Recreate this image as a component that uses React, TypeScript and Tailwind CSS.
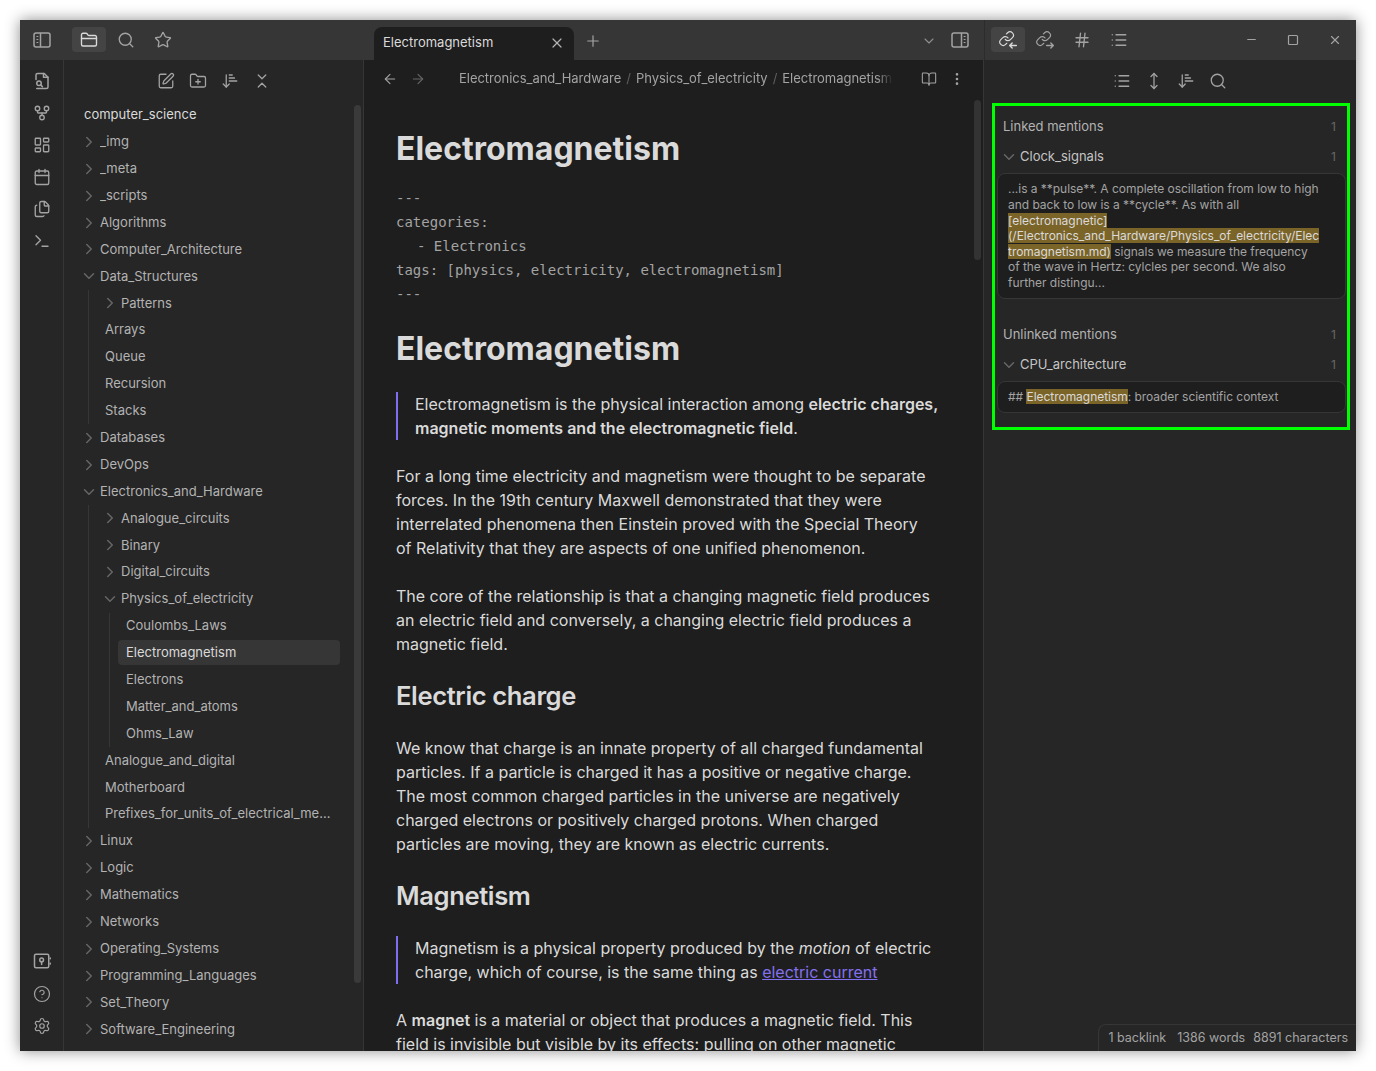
import { ReactNode } from 'react';
import {
  ArrowDownNarrowWide,
  ArrowLeft,
  ArrowRight,
  BookOpen,
  Calendar,
  ChevronDown,
  ChevronRight,
  ChevronsDownUp,
  CircleHelp,
  EllipsisVertical,
  Files,
  FolderClosed,
  FolderPlus,
  GitFork,
  Hash,
  LayoutDashboard,
  List,
  Minus,
  MoveVertical,
  Plus,
  Search,
  Settings,
  Square,
  SquarePen,
  Star,
  Terminal,
  X,
} from 'lucide-react';

type TreeNode = { name: string; children?: TreeNode[]; closed?: boolean; active?: boolean };

const tree: TreeNode[] = [
  { name: '_img', closed: true },
  { name: '_meta', closed: true },
  { name: '_scripts', closed: true },
  { name: 'Algorithms', closed: true },
  { name: 'Computer_Architecture', closed: true },
  {
    name: 'Data_Structures',
    children: [
      { name: 'Patterns', closed: true },
      { name: 'Arrays' },
      { name: 'Queue' },
      { name: 'Recursion' },
      { name: 'Stacks' },
    ],
  },
  { name: 'Databases', closed: true },
  { name: 'DevOps', closed: true },
  {
    name: 'Electronics_and_Hardware',
    children: [
      { name: 'Analogue_circuits', closed: true },
      { name: 'Binary', closed: true },
      { name: 'Digital_circuits', closed: true },
      {
        name: 'Physics_of_electricity',
        children: [
          { name: 'Coulombs_Laws' },
          { name: 'Electromagnetism', active: true },
          { name: 'Electrons' },
          { name: 'Matter_and_atoms' },
          { name: 'Ohms_Law' },
        ],
      },
      { name: 'Analogue_and_digital' },
      { name: 'Motherboard' },
      { name: 'Prefixes_for_units_of_electrical_measurement' },
    ],
  },
  { name: 'Linux', closed: true },
  { name: 'Logic', closed: true },
  { name: 'Mathematics', closed: true },
  { name: 'Networks', closed: true },
  { name: 'Operating_Systems', closed: true },
  { name: 'Programming_Languages', closed: true },
  { name: 'Set_Theory', closed: true },
  { name: 'Software_Engineering', closed: true },
];

// Obsidian's own icons that lucide doesn't ship
function SidebarLeftIcon() {
  return (
    <svg width="20" height="20" viewBox="0 0 20 20" fill="none" stroke="currentColor" strokeWidth="1.500">
      <rect x="2" y="3" width="16" height="14" rx="2" />
      <path d="M8.500 3v14" />
      <path d="M4.500 6.500h1.800M4.500 9.500h1.800M4.500 12.500h1.800" strokeWidth="1.200" />
    </svg>
  );
}

function SidebarRightIcon() {
  return (
    <svg width="20" height="20" viewBox="0 0 20 20" fill="none" stroke="currentColor" strokeWidth="1.500">
      <rect x="2" y="3" width="16" height="14" rx="2" />
      <path d="M11.500 3v14" />
      <path d="M13.700 6.500h1.800M13.700 9.500h1.800M13.700 12.500h1.800" strokeWidth="1.200" />
    </svg>
  );
}

function LinkArrowIcon({ out }: { out?: boolean }) {
  return (
    <svg width="20" height="20" viewBox="0 0 24 24" fill="none" stroke="currentColor" strokeWidth="1.700" strokeLinecap="round" strokeLinejoin="round">
      <g transform="translate(0.500 0.500) scale(0.82)">
        <path d="M10 13a5 5 0 0 0 7.540.54l3-3a5 5 0 0 0-7.070-7.070l-1.720 1.710" />
        <path d="M14 11a5 5 0 0 0-7.540-.54l-3 3a5 5 0 0 0 7.070 7.070l1.710-1.710" />
      </g>
      {out ? (
        <path d="M14 18.500h8M19 15.500l3 3-3 3" />
      ) : (
        <path d="M22 18.500h-8M17 15.500l-3 3 3 3" />
      )}
    </svg>
  );
}

function FileSearchIcon() {
  return (
    <svg width="18" height="18" viewBox="0 0 24 24" fill="none" stroke="currentColor" strokeWidth="2" strokeLinecap="round" strokeLinejoin="round">
      <path d="M4 10V4a2 2 0 0 1 2-2h9l5 5v13a2 2 0 0 1-2 2H5" />
      <path d="M14 2v5h6" />
      <circle cx="8" cy="15" r="3" />
      <path d="m12.500 19.500-2.300-2.300" />
    </svg>
  );
}

function VaultIcon() {
  return (
    <svg width="18" height="18" viewBox="0 0 24 24" fill="none" stroke="currentColor" strokeWidth="2" strokeLinecap="round" strokeLinejoin="round">
      <rect x="2" y="3" width="19" height="18" rx="2" />
      <circle cx="11.500" cy="10.500" r="2.500" />
      <path d="M11.500 13v3.500M23 8v1M23 15v1" />
    </svg>
  );
}

function IconButton({ children, active, className = '' }: { children: ReactNode; active?: boolean; className?: string }) {
  return (
    <div className={`flex h-[25px] w-[34px] items-center justify-center rounded-[4px] ${active ? 'bg-[#444444] text-[#dadada]' : 'text-[#a3a3a3]'} ${className}`}>
      {children}
    </div>
  );
}

function TreeRow({ node }: { node: TreeNode }) {
  const isFolder = node.closed || node.children;
  return (
    <>
      <div className="h-[26.900px] py-px">
        <div className={`flex h-full items-center rounded-[4px] text-[13px] ${isFolder ? 'pl-1' : 'pl-2'} ${node.active ? 'bg-[#363636] text-[#dadada]' : 'text-[#b3b3b3]'}`}>
          {isFolder &&
            (node.closed ? (
              <ChevronRight size={18} strokeWidth={2} className="mr-[2px] shrink-0 text-[#666666]" />
            ) : (
              <ChevronDown size={18} strokeWidth={2} className="mr-[2px] shrink-0 text-[#666666]" />
            ))}
          <span className="truncate pr-2">{node.name}</span>
        </div>
      </div>
      {node.children && (
        <div className="ml-3 border-l border-[#363636] pl-2">
          {node.children.map((child) => (
            <TreeRow key={child.name} node={child} />
          ))}
        </div>
      )}
    </>
  );
}

function MentionHeading({ label, collapse }: { label: string; collapse?: boolean }) {
  return (
    <div className={`flex h-[30px] items-center justify-between pr-[11px] pl-2 text-[13px] ${collapse ? 'text-[#c4c4c4]' : 'text-[#b3b3b3]'}`}>
      <span className="flex items-center">
        {collapse && <ChevronDown size={18} strokeWidth={2} className="mr-[2px] -ml-[3px] text-[#666666]" />}
        {label}
      </span>
      <span className="text-[12px] text-[#666666]">1</span>
    </div>
  );
}

function Mention({ children }: { children: ReactNode }) {
  return (
    <div className="mr-px ml-[2px] rounded-[8px] border border-[#363636] bg-[#1e1e1e] py-[7.400px] pr-[24px] pl-[10px] text-[12px] leading-[15.600px] tracking-[-0.003em] break-words text-[#a3a3a3]">
      {children}
    </div>
  );
}

function Hl({ children }: { children: ReactNode }) {
  return <span className="bg-[#7b6428] text-[#dadada]">{children}</span>;
}

export default function App() {
  return (
    <div className="h-screen overflow-hidden bg-white p-5 [font-family:Inter,'Noto_Sans',sans-serif]">
      <div className="flex h-[1031px] flex-col overflow-hidden bg-[#262626] shadow-[0_0_14px_rgba(0,0,0,0.45)]">
        {/* Title bar */}
        <div className="flex h-10 shrink-0 bg-[#363636]">
          <div className="flex w-[344px] shrink-0 items-center pb-px pl-[5px]">
            <IconButton>
              <SidebarLeftIcon />
            </IconButton>
            <IconButton active className="ml-[13px]">
              <FolderClosed size={18} strokeWidth={1.8} />
            </IconButton>
            <div className="ml-[3px] flex items-center">
              <IconButton>
                <Search size={18} strokeWidth={1.8} />
              </IconButton>
              <IconButton className="ml-[3px]">
                <Star size={18} strokeWidth={1.8} />
              </IconButton>
            </div>
          </div>
          <div className="flex w-[620px] shrink-0 items-end pl-[10px]">
            <div className="flex h-[33px] w-[200px] items-center justify-between rounded-t-[8px] bg-[#1e1e1e] px-[9px] pb-px text-[13px] text-[#dadada]">
              <span>Electromagnetism</span>
              <X size={16} strokeWidth={1.8} className="text-[#b3b3b3]" />
            </div>
            <div className="mb-[10px] ml-[10px] text-[#a3a3a3]">
              <Plus size={18} strokeWidth={1.6} />
            </div>
            <div className="mb-[11px] ml-auto text-[#8f8f8f]">
              <ChevronDown size={16} strokeWidth={1.6} />
            </div>
            <div className="mr-[14px] mb-[10px] ml-[13px] text-[#a3a3a3]">
              <SidebarRightIcon />
            </div>
          </div>
          <div className="flex flex-1 items-center border-l border-[#2c2c2c] pb-px pl-[6px]">
            <IconButton active>
              <LinkArrowIcon />
            </IconButton>
            <IconButton className="ml-[3px]">
              <LinkArrowIcon out />
            </IconButton>
            <IconButton className="ml-[3px]">
              <Hash size={18} strokeWidth={1.8} />
            </IconButton>
            <IconButton className="ml-[3px]">
              <List size={18} strokeWidth={1.8} />
            </IconButton>
            <div className="ml-auto flex items-center pr-[14px] text-[#a3a3a3]">
              <Minus size={13} strokeWidth={2.2} />
              <Square size={12} strokeWidth={2.4} className="ml-[29px]" />
              <X size={14} strokeWidth={2} className="ml-[29px]" />
            </div>
          </div>
        </div>

        <div className="flex min-h-0 flex-1">
          {/* Ribbon */}
          <div className="flex w-[44px] shrink-0 flex-col items-center justify-between border-r border-[#363636] pt-3 pb-4 text-[#a3a3a3]">
            <div className="flex flex-col items-center gap-[14px]">
              <FileSearchIcon />
              <GitFork size={18} strokeWidth={1.8} />
              <LayoutDashboard size={18} strokeWidth={1.8} />
              <Calendar size={18} strokeWidth={1.8} />
              <Files size={18} strokeWidth={1.8} />
              <Terminal size={18} strokeWidth={1.8} />
            </div>
            <div className="flex flex-col items-center">
              <VaultIcon />
              <CircleHelp size={18} strokeWidth={1.6} className="mt-[15px]" />
              <Settings size={18} strokeWidth={1.6} className="mt-[14px]" />
            </div>
          </div>

          {/* File explorer */}
          <div className="relative flex w-[300px] shrink-0 flex-col border-r border-[#363636]">
            <div className="flex h-[41.600px] shrink-0 items-center justify-center gap-[14px] pt-px pl-px text-[#a3a3a3]">
              <SquarePen size={18} strokeWidth={1.7} />
              <FolderPlus size={18} strokeWidth={1.7} />
              <ArrowDownNarrowWide size={18} strokeWidth={1.7} />
              <ChevronsDownUp size={18} strokeWidth={1.7} />
            </div>
            <div className="min-h-0 flex-1 overflow-hidden pr-[23px] pl-3">
              <div className="flex h-[26.900px] items-center pl-2 text-[13px] text-[#dadada]">computer_science</div>
              {tree.map((node) => (
                <TreeRow key={node.name} node={node} />
              ))}
            </div>
            <div className="absolute top-[45px] right-[2px] h-[878px] w-[7px] rounded-full bg-[#3a3a3a]" />
          </div>

          {/* Note */}
          <div className="relative flex w-[620px] shrink-0 flex-col border-r border-[#363636] bg-[#1e1e1e]">
            <div className="flex h-[38px] shrink-0 items-center pr-[18px] pl-[18px] text-[#a3a3a3]">
              <ArrowLeft size={16} strokeWidth={1.6} />
              <ArrowRight size={16} strokeWidth={1.6} className="ml-3 text-[#666666]" />
              <div className="ml-[33px] flex w-[434px] items-center overflow-hidden text-[13px] tracking-[-0.002em] whitespace-nowrap text-[#a3a3a3] [mask-image:linear-gradient(to_left,transparent,black_16px)]">
                <span>Electronics_and_Hardware</span>
                <span className="mx-[5px] text-[#5e5e5e]">/</span>
                <span>Physics_of_electricity</span>
                <span className="mx-[5px] text-[#5e5e5e]">/</span>
                <span>Electromagnetism</span>
              </div>
              <BookOpen size={16} strokeWidth={1.6} className="ml-auto" />
              <EllipsisVertical size={16} strokeWidth={2} className="ml-3" />
            </div>
            <div className="min-h-0 flex-1 overflow-hidden pt-[31px] pr-[39px] pl-8 text-[16px] leading-6 text-[#dadada]">
              <h1 className="text-[32px] leading-10 font-bold">Electromagnetism</h1>
              <div className="mt-[17px] text-[14px] leading-6 text-[#a3a3a3] [font-family:'DejaVu_Sans_Mono',monospace]">
                <div>---</div>
                <div>categories:</div>
                <div className="pl-[21px]">- Electronics</div>
                <div>tags: [physics, electricity, electromagnetism]</div>
                <div>---</div>
              </div>
              <h1 className="mt-[23px] text-[32px] leading-10 font-bold">Electromagnetism</h1>
              <blockquote className="mt-[23px] border-l-2 border-[#7f6df2] pl-[17px]">
                Electromagnetism is the physical interaction among <strong className="font-semibold">electric charges, magnetic moments and the electromagnetic field</strong>.
              </blockquote>
              <p className="mt-6 max-w-[535px]">
                For a long time electricity and magnetism were thought to be separate forces. In the 19th century Maxwell demonstrated that they were interrelated phenomena then Einstein proved with the Special Theory of Relativity that they are aspects of one unified phenomenon.
              </p>
              <p className="mt-6">
                The core of the relationship is that a changing magnetic field produces an electric field and conversely, a changing electric field produces a magnetic field.
              </p>
              <h2 className="mt-6 text-[25.600px] leading-8 font-semibold tracking-[-0.015em]">Electric charge</h2>
              <p className="mt-6">
                We know that charge is an innate property of all charged fundamental particles. If a particle is charged it has a positive or negative charge. The most common charged particles in the universe are negatively charged electrons or positively charged protons. When charged particles are moving, they are known as electric currents.
              </p>
              <h2 className="mt-6 text-[25.600px] leading-8 font-semibold tracking-[-0.015em]">Magnetism</h2>
              <blockquote className="mt-6 border-l-2 border-[#7f6df2] pl-[17px]">
                Magnetism is a physical property produced by the <em>motion</em> of electric charge, which of course, is the same thing as <a className="text-[#8370ee] underline">electric current</a>
              </blockquote>
              <p className="mt-6">
                A <strong className="font-semibold">magnet</strong> is a material or object that produces a magnetic field. This field is invisible but visible by its effects: pulling on other magnetic
              </p>
            </div>
            <div className="absolute top-10 right-[2px] h-[160px] w-[7px] rounded-full bg-[#333333]" />
          </div>

          {/* Backlinks */}
          <div className="relative flex min-w-0 flex-1 flex-col">
            <div className="flex h-[43px] shrink-0 items-center justify-center gap-[14px] pb-px text-[#a3a3a3]">
              <List size={18} strokeWidth={1.7} />
              <MoveVertical size={18} strokeWidth={1.7} />
              <ArrowDownNarrowWide size={18} strokeWidth={1.7} />
              <Search size={18} strokeWidth={1.7} />
            </div>
            <div className="mr-[6px] ml-2 border-[3px] border-[#00ff00] pt-[6px] pb-[14px]">
              <MentionHeading label="Linked mentions" />
              <MentionHeading label="Clock_signals" collapse />
              <div className="mt-px">
                <Mention>
                  ...is a **pulse**. A complete oscillation from low to high and back to low is a **cycle**. As with all <Hl>[electromagnetic](/Electronics_and_Hardware/Physics_of_electricity/Electromagnetism.md)</Hl> signals we measure the frequency of the wave in Hertz: cylcles per second. We also further distingu...
                </Mention>
              </div>
              <div className="mt-[21px]">
                <MentionHeading label="Unlinked mentions" />
              </div>
              <MentionHeading label="CPU_architecture" collapse />
              <div className="mt-px">
                <Mention>
                  ## <Hl>Electromagnetism</Hl>: broader scientific context
                </Mention>
              </div>
            </div>
            <div className="absolute right-0 bottom-0 flex h-[27px] items-center rounded-tl-[8px] border-t border-l border-[#363636] bg-[#262626] pr-2 pl-[9px] text-[12.500px] text-[#a3a3a3]">
              <span>1 backlink</span>
              <span className="ml-[11px]">1386 words</span>
              <span className="ml-2">8891 characters</span>
            </div>
          </div>
        </div>
      </div>
    </div>
  );
}
